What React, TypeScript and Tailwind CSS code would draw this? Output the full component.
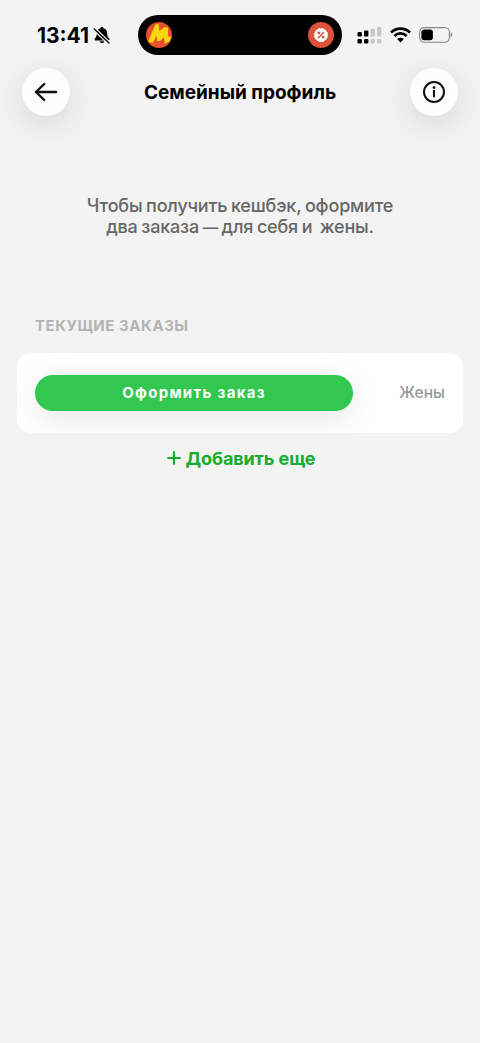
import type { ReactNode } from "react"

function BellOff() {
    return (
        <svg width="18" height="18" viewBox="0 0 18 18">
            <path d="M9 0.9c.9 0 1.4.6 1.5 1.3 2.4.7 3.7 2.6 3.7 5.1 0 3.2.9 4.1 2 5.2.7.8.3 1.9-.8 1.9H2.600c-1.100 0-1.500-1.100-.8-1.900 1.100-1.100 2-2 2-5.200 0-2.500 1.300-4.400 3.700-5.100C7.600 1.500 8.100.9 9 .9z" />
            <path d="M6.600 15.300h4.800c-.3 1.100-1.200 1.800-2.400 1.800s-2.100-.7-2.400-1.800z" />
            <path d="M1.900 2.100 17 16.200" stroke="#f3f3f3" strokeWidth="1.300" />
            <path d="M1.200 3.100 15.900 17" stroke="#000" strokeWidth="1.400" strokeLinecap="round" />
            <path d="M0.300 4 15 17.900" stroke="#f3f3f3" strokeWidth="1.100" />
        </svg>
    )
}

function Signal() {
    return (
        <svg width="25" height="17" viewBox="0 0 25 17">
            <g fill="#000">
                <rect x="0.500" y="5" width="4.400" height="4.600" rx="1.200" />
                <rect x="7" y="3.500" width="4.400" height="6.100" rx="1.200" />
                <rect x="0.500" y="12" width="4.400" height="4.400" rx="1.200" />
                <rect x="7" y="12" width="4.400" height="4.400" rx="1.200" />
            </g>
            <g fill="#c8c8c8">
                <rect x="13.500" y="1.800" width="4.400" height="7.800" rx="1.200" />
                <rect x="20" y="0" width="4.400" height="9.600" rx="1.200" />
                <rect x="13.500" y="12" width="4.400" height="4.400" rx="1.200" />
                <rect x="20" y="12" width="4.400" height="4.400" rx="1.200" />
            </g>
        </svg>
    )
}

function Wifi() {
    return (
        <svg width="21" height="16" viewBox="0 0 21 16" fill="none" stroke="#000" strokeWidth="2.700">
            <path d="M1 5.500a13.400 13.400 0 0 1 19 0" />
            <path d="M4.400 9a8.600 8.600 0 0 1 12.200 0" />
            <path d="M10.500 15.400 7.200 12.100a4.700 4.700 0 0 1 6.600 0z" fill="#000" stroke="none" />
        </svg>
    )
}

function Battery() {
    return (
        <svg width="34" height="16" viewBox="0 0 34 16">
            <rect x="0.600" y="0.600" width="29.800" height="14.600" rx="4.600" fill="none" stroke="#888" strokeWidth="1.100" />
            <rect x="2.400" y="2.500" width="11.500" height="10.800" rx="2.800" />
            <path d="M31.700 5.300c2 .7 2 4.500 0 5.200z" fill="#888" />
        </svg>
    )
}

function BrandLogo() {
    return (
        <svg width="26" height="26" viewBox="0 0 26 26">
            <circle cx="13" cy="13" r="13" fill="#e8502c" />
            <path d="M2 19.800 9.500 2.300 12.900 2.300 13.400 9.300 18.500 5 22 5.500 21.900 14 25.200 15 23.600 19.400 18.700 21.500 17.900 15.200 14 19 11 19 10.300 13.500 6.900 21z" fill="#fcd610" />
        </svg>
    )
}

function DiscountBadge() {
    return (
        <svg width="26" height="26" viewBox="0 0 26 26">
            <circle cx="13" cy="13" r="13" fill="#dc523b" />
            <circle cx="13" cy="13" r="6.600" fill="#fff" stroke="#fff" strokeWidth="1" strokeDasharray="2.300 1.150" />
            <g stroke="#dc523b" strokeWidth="1.500" fill="none" strokeLinecap="round">
                <path d="M15.700 10.500 10.300 15.700" />
                <circle cx="10.900" cy="10.900" r="0.700" />
                <circle cx="15.100" cy="15.100" r="0.700" />
            </g>
        </svg>
    )
}

function StatusBar() {
    return (
        <div className="flex h-[55px] pt-[15px]">
            <div className="flex h-10 w-[138px] shrink-0 items-center pl-[37px]">
                <span className="w-[56px] pt-px text-[21px] leading-none font-bold whitespace-nowrap">13:41</span>
                <BellOff />
            </div>
            <div className="flex h-10 w-[204px] shrink-0 items-center justify-between rounded-full bg-black px-2">
                <BrandLogo />
                <DiscountBadge />
            </div>
            <div className="flex h-10 items-center gap-[8px] pl-[15px]">
                <Signal />
                <Wifi />
                <Battery />
            </div>
        </div>
    )
}

function RoundButton({ label, children }: { label: string; children: ReactNode }) {
    return (
        <button aria-label={label} className="flex size-12 items-center justify-center rounded-full bg-[#fdfdfd] shadow-[0_8px_32px_rgba(0,0,0,0.12)]">
            {children}
        </button>
    )
}

export default function App() {
    return (
        <div className="h-[1043px] w-[480px] overflow-hidden bg-[#f3f3f3] font-['Inter',sans-serif] text-black">
            <StatusBar />
            <header className="mt-[13px] flex items-center justify-between px-[22px]">
                <RoundButton label="Назад">
                    <svg width="24" height="20" viewBox="0 0 24 20" fill="none" stroke="#111" strokeWidth="2.400" strokeLinecap="round" strokeLinejoin="round">
                        <path d="M22 10H2M10.200 2 2 10l8.200 8" />
                    </svg>
                </RoundButton>
                <h1 className="pt-0.5 text-[19px] leading-6 font-bold whitespace-nowrap">Семейный профиль</h1>
                <RoundButton label="Информация">
                    <svg width="24" height="24" viewBox="0 0 24 24" fill="none" stroke="#111" strokeWidth="2">
                        <circle cx="12" cy="12" r="10" />
                        <path d="M12 10v7.300" />
                        <circle cx="12" cy="7.600" r="1.400" fill="#111" stroke="none" />
                    </svg>
                </RoundButton>
            </header>
            <p className="mt-[79px] text-center text-[18px] leading-[21px] font-medium tracking-[-0.17px] whitespace-pre text-[#666] [word-spacing:-1px]">
                Чтобы получить кешбэк, оформите<br />два заказа <span className="text-[15.5px]">—</span> для себя и{"  "}жены.
            </p>
            <h2 className="mt-[78px] pl-[35px] text-[15px] leading-5 font-bold tracking-[0.55px] text-[#b3b3b3]">ТЕКУЩИЕ ЗАКАЗЫ</h2>
            <div className="mx-[17px] mt-[17px] flex h-20 items-center justify-between overflow-hidden rounded-[14px] bg-white px-[18px]">
                <button className="h-9 w-[318px] rounded-full bg-[#32c74f] text-[15px] font-bold tracking-[1.3px] text-white shadow-[0_8px_32px_rgba(0,0,0,0.1)]">
                    Оформить заказ
                </button>
                <span className="text-[15.7px] font-medium text-[#999]">Жены</span>
            </div>
            <button className="mx-auto mt-[13px] flex h-6 items-center gap-[5px] pl-0.5 text-[18px] font-bold tracking-[-0.1px] whitespace-nowrap text-[#14ae2e]">
                <svg width="14" height="14" viewBox="0 0 14 14" stroke="currentColor" strokeWidth="2.200" strokeLinecap="round">
                    <path d="M7 1.200v11.600M1.200 7h11.600" />
                </svg>
                Добавить еще
            </button>
        </div>
    )
}
